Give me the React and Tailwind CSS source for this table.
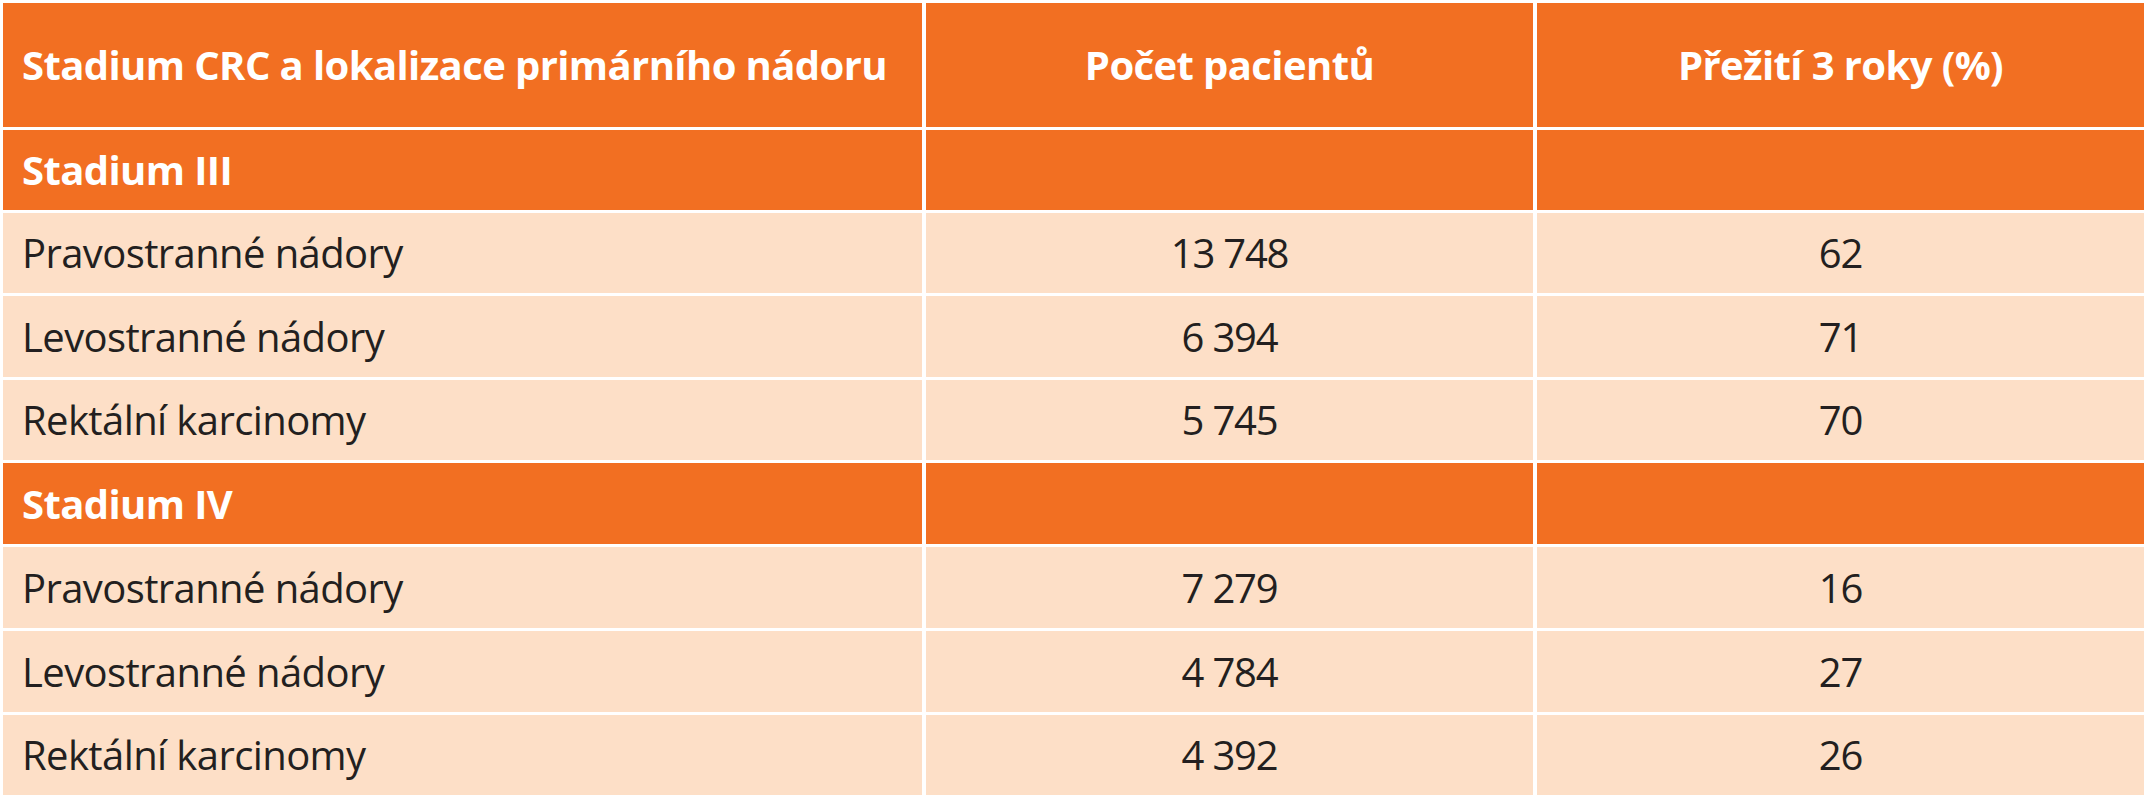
import React from "react";

const rows = [
  { type: "stage", label: "Stadium III", h: "h-[80px]" },
  { type: "data", label: "Pravostranné nádory", n: "13 748", p: "62", h: "h-[80px]" },
  { type: "data", label: "Levostranné nádory", n: "6 394", p: "71", h: "h-[81px]" },
  { type: "data", label: "Rektální karcinomy", n: "5 745", p: "70", h: "h-[80px]" },
  { type: "stage", label: "Stadium IV", h: "h-[81px]" },
  { type: "data", label: "Pravostranné nádory", n: "7 279", p: "16", h: "h-[81px]" },
  { type: "data", label: "Levostranné nádory", n: "4 784", p: "27", h: "h-[81px]" },
  { type: "data", label: "Rektální karcinomy", n: "4 392", p: "26", h: "h-[80px]" },
];

export default function App() {
  return (
    <div
      className="w-[2151px] h-[800px] bg-white pt-[3px] pl-[3px] overflow-hidden"
      style={{ fontFamily: '"Open Sans", "Noto Sans", sans-serif' }}
    >
      <div className="w-[2141px] flex flex-col gap-[3px]">
        <div className="grid grid-cols-[919px_607px_607px] gap-x-[4px] h-[124px] text-white font-bold text-[40px] leading-none tracking-[-0.6px]">
          <div className="bg-[#f26f22] flex items-center pl-[19px]">
            Stadium CRC a lokalizace primárního nádoru
          </div>
          <div className="bg-[#f26f22] flex items-center justify-center">
            Počet pacientů
          </div>
          <div className="bg-[#f26f22] flex items-center justify-center">
            Přežití 3 roky (%)
          </div>
        </div>
        {rows.map((r, i) =>
          r.type === "stage" ? (
            <div
              key={i}
              className={`grid grid-cols-[919px_607px_607px] gap-x-[4px] ${r.h} text-white font-bold text-[40px] leading-none tracking-[-0.6px]`}
            >
              <div className="bg-[#f26f22] flex items-center pl-[19px]">{r.label}</div>
              <div className="bg-[#f26f22]" />
              <div className="bg-[#f26f22]" />
            </div>
          ) : (
            <div
              key={i}
              className={`grid grid-cols-[919px_607px_607px] gap-x-[4px] ${r.h} text-[#231f20] text-[40px] leading-none tracking-[-0.6px]`}
            >
              <div className="bg-[#fddfc7] flex items-center pl-[19px]">{r.label}</div>
              <div className="bg-[#fddfc7] flex items-center justify-center tracking-[-1.2px]">{r.n}</div>
              <div className="bg-[#fddfc7] flex items-center justify-center tracking-[-1.2px]">{r.p}</div>
            </div>
          )
        )}
      </div>
    </div>
  );
}
